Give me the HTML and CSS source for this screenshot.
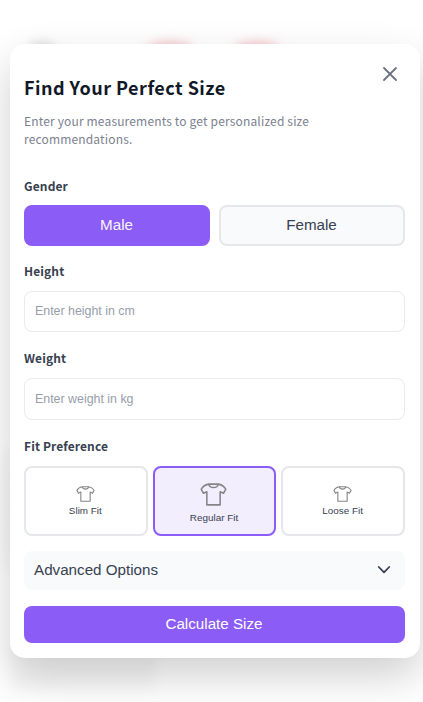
FILE: index.html
```html
<!DOCTYPE html>
<html lang="en">
<head>
<meta charset="utf-8">
<title>Find Your Perfect Size</title>
<link rel="stylesheet" href="styles.css">
</head>
<body>
<svg width="0" height="0" class="defs" aria-hidden="true">
  <symbol id="shirt" viewBox="0 0 26 22">
    <path d="M8.3 1 C5.5 1.6 3 2.2 1.2 6 L3.4 9.8 L6.6 8.4 V21 H19.4 V8.4 L22.6 9.8 L24.8 6 C23 2.2 20.5 1.6 17.7 1 C16.6 5.4 9.4 5.4 8.3 1 Z M8.3 1 H17.7" fill="none" stroke="currentColor" stroke-width="1.5" stroke-linejoin="round"/>
  </symbol>
</svg>
<div class="backdrop" aria-hidden="true">
  <i class="blob blob-dark"></i><i class="blob blob-red"></i><i class="blob blob-red blob-second"></i>
  <i class="blob blob-side"></i><i class="blob blob-foot"></i>
</div>
<main class="modal">
  <button class="close" aria-label="Close"><svg width="16" height="16" viewBox="0 0 16 16"><path d="M2 2 14 14M14 2 2 14"/></svg></button>
  <h1>Find Your Perfect Size</h1>
  <p class="intro">Enter your measurements to get personalized size recommendations.</p>
  <h2>Gender</h2>
  <div class="genders">
    <button class="gender selected">Male</button>
    <button class="gender">Female</button>
  </div>
  <h2>Height</h2>
  <input class="field" placeholder="Enter height in cm" aria-label="Height">
  <h2>Weight</h2>
  <input class="field" placeholder="Enter weight in kg" aria-label="Weight">
  <h2>Fit Preference</h2>
  <div class="fits">
    <button class="fit"><svg class="shirt"><use href="#shirt"/></svg>Slim Fit</button>
    <button class="fit chosen"><svg class="shirt"><use href="#shirt"/></svg>Regular Fit</button>
    <button class="fit"><svg class="shirt"><use href="#shirt"/></svg>Loose Fit</button>
  </div>
  <button class="advanced">Advanced Options<svg width="14" height="10" viewBox="0 0 14 10"><path d="M1.8 2 7 7.4 12.2 2"/></svg></button>
  <button class="submit">Calculate Size</button>
</main>
</body>
</html>
```
FILE: styles.css
```css
* { box-sizing: border-box; }
body {
  margin: 0;
  height: 702px;
  overflow: hidden;
  background: #fff;
  font-family: "Noto Sans CJK SC", "Noto Sans", sans-serif;
}
.defs { display: block; position: absolute; }
.backdrop { position: absolute; inset: 0; overflow: hidden; }
.blob { position: absolute; border-radius: 50%; filter: blur(6px); }
.blob-dark { left: 29px; top: 43px; width: 26px; height: 14px; background: #d4d4d4; }
.blob-red { left: 148px; top: 43px; width: 44px; height: 14px; background: #f3b6bc; }
.blob-second { left: 235px; }
.blob-side { left: 2px; top: 445px; width: 16px; height: 130px; background: #f6f6f6; }
.blob-foot { left: 10px; top: 640px; width: 145px; height: 50px; border-radius: 0; background: #f8f8f8; }
.modal {
  position: relative;
  display: flex;
  flex-direction: column;
  width: 410.5px;
  height: 614px;
  margin: 44px 0 0 9.5px;
  padding: 28px 15px 15px 14.5px;
  border-radius: 15px;
  background: #fff;
  box-shadow: 0 18px 42px rgba(0, 0, 0, .19);
}
button { font-family: "Liberation Sans", Arial, sans-serif; margin: 0; padding: 0; border: 0; }
.close { position: absolute; left: 372.5px; top: 22px; width: 16px; height: 16px; background: none; }
svg { display: block; fill: none; }
.close path { stroke: #6b7280; stroke-width: 1.8; stroke-linecap: round; }
h1 { margin: 0; font-size: 18px; line-height: 30px; font-weight: 700; letter-spacing: .48px; color: #111827; }
.intro { width: 320px; margin: 10px 0 0; font-size: 12px; line-height: 18px; letter-spacing: .16px; color: #7b8190; }
h2 { margin: 0; font-size: 12px; line-height: 18px; font-weight: 700; letter-spacing: .12px; color: #374151; }
.intro + h2 { margin-top: 29px; }
.genders { display: grid; grid-template-columns: 1fr 1fr; gap: 9px; height: 41px; margin: 10px 0 16px; }
.gender { padding: 0 1px 2px 0; border: 2px solid #e5e7eb; border-radius: 8px; background: #f9fafb; color: #374151; font-size: 15.2px; }
.gender.selected { border-color: #8b5cf6; background: #8b5cf6; color: #f8f5ff; }
.field {
  height: 42px;
  margin: 11px 0 17px;
  padding: 0 10px 1px;
  border: 1px solid #e8eaed;
  border-radius: 8px;
  background: #fff;
  font: 12.4px "Liberation Sans", Arial, sans-serif;
}
.field::placeholder { color: #979eab; opacity: 1; }
.fits { display: grid; grid-template-columns: repeat(3, 1fr); gap: 5px; height: 70px; margin-top: 11px; }
.fit {
  display: flex;
  flex-direction: column;
  align-items: center;
  justify-content: center;
  gap: 3px;
  padding: 2px 1px 0 0;
  border: 2px solid #e5e7eb;
  border-radius: 8px;
  background: #fff;
  color: #374151;
  font-size: 9.9px;
  line-height: 12px;
}
.shirt { width: 19px; height: 16px; color: #858585; }
.chosen { border-color: #8b5cf6; background: #f3eefe; gap: 6px; padding-top: 5px; }
.chosen .shirt { width: 27px; height: 23px; }
.advanced {
  display: flex;
  align-items: center;
  justify-content: space-between;
  height: 40px;
  margin-top: 15px;
  padding: 0 14px 1px 10px;
  border-radius: 8px;
  background: #f9fafb;
  color: #374151;
  font-size: 15.2px;
}
.advanced path { stroke: #374151; stroke-width: 1.8; stroke-linecap: round; stroke-linejoin: round; }
.submit { height: 37.5px; margin-top: 15.5px; padding: 0 1px 2px 0; border-radius: 8px; background: #8b5cf6; color: #fff; font-size: 15.2px; }
```
